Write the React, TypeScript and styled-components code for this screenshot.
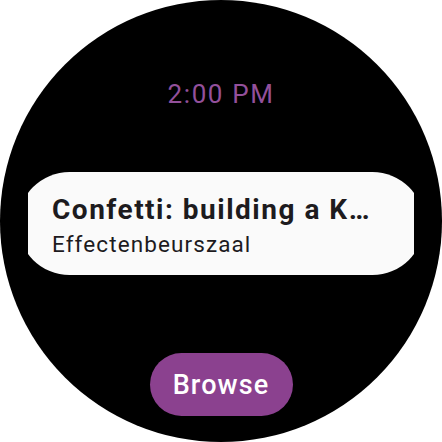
import React from 'react';
import styled, { createGlobalStyle } from 'styled-components';

const GlobalStyle = createGlobalStyle`
    html, body {
        margin: 0;
        padding: 0;
        background: #ffffff;
    }
    body {
        font-family: Roboto, "Noto Sans", sans-serif;
    }
`;

const WatchFace = styled.div`
    width: 442px;
    height: 442px;
    border-radius: 50%;
    background: #000000;
    overflow: hidden;
    display: flex;
    flex-direction: column;
    align-items: center;
    box-sizing: border-box;
    padding-top: 79px;
`;

const Time = styled.div`
    color: #93509b;
    font-size: 26px;
    line-height: 30px;
    letter-spacing: 1.6px;
`;

const CardClip = styled.div`
    width: 386px;
    margin-top: 63px;
    overflow: hidden;
`;

const Card = styled.div`
    margin: 0 -10px;
    background: #fafafa;
    border-radius: 52px;
    padding: 22px 20px 17px 34px;
    display: flex;
    flex-direction: column;
    gap: 4px;
`;

const Title = styled.div`
    color: #1d1b1e;
    font-size: 28px;
    font-weight: 700;
    line-height: 32px;
    letter-spacing: 1.5px;
    white-space: nowrap;
`;

const Subtitle = styled.div`
    color: #1d1b1e;
    font-size: 22.5px;
    line-height: 28px;
    letter-spacing: 1.1px;
    white-space: nowrap;
`;

const ChipButton = styled.button`
    margin-top: 78px;
    width: 143px;
    height: 63px;
    border: none;
    border-radius: 32px;
    background: #8b418f;
    color: #ffffff;
    font-family: Roboto, "Noto Sans", sans-serif;
    font-size: 27px;
    font-weight: 500;
    letter-spacing: 1.1px;
    padding: 0;
    cursor: pointer;
`;

const App: React.FC = () => {
    return (
        <>
            <GlobalStyle />
            <WatchFace>
                <Time>2:00 PM</Time>
                <CardClip>
                    <Card>
                        <Title>Confetti: building a K…</Title>
                        <Subtitle>Effectenbeurszaal</Subtitle>
                    </Card>
                </CardClip>
                <ChipButton>Browse</ChipButton>
            </WatchFace>
        </>
    );
};

export default App;
